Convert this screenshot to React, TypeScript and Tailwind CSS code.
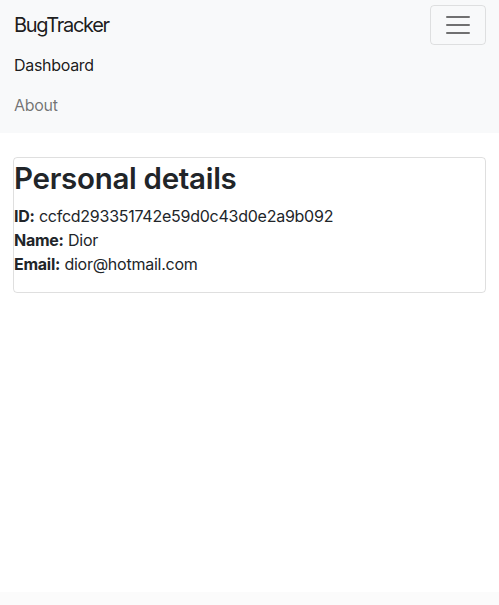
import React from "react";

export default function App() {
  return (
    <div
      className="min-h-[605px] flex flex-col bg-white text-[#212529]"
      style={{ fontFamily: 'Inter, "Liberation Sans", sans-serif' }}
    >
      <nav className="bg-[#f8f9fa] pl-[13px] pr-[13px] pt-[5px] pb-[8px]">
        <div className="flex items-center justify-between">
          <span className="text-[20px] leading-[30px] py-[5px] text-black/90 tracking-[-1.3px] pl-[1px]">
            BugTracker
          </span>
          <button className="w-[56px] h-[40px] flex items-center justify-center border border-black/10 rounded-[4px]">
            <svg width="30" height="30" viewBox="0 0 30 30">
              <path
                d="M4 7h22M4 15h22M4 23h22"
                stroke="rgba(0,0,0,0.55)"
                strokeWidth="2"
                strokeLinecap="round"
              />
            </svg>
          </button>
        </div>
        <div className="flex flex-col tracking-[-0.3px] pl-[1px]">
          <a className="py-[8px] text-[16px] leading-[24px] text-black/90">Dashboard</a>
          <a className="py-[8px] text-[16px] leading-[24px] text-black/55">About</a>
        </div>
      </nav>
      <div className="px-[13px] pt-[24px]">
        <div className="border border-black/[0.125] rounded-[4px]">
          <h1 className="text-[29.5px] leading-[1.2] font-semibold tracking-[-0.3px] mt-[3px] mb-[8px]">
            Personal details
          </h1>
          <p className="text-[16px] leading-[24px] mb-[16px] tracking-[-0.25px]">
            <b className="font-bold">ID:</b> ccfcd293351742e59d0c43d0e2a9b092
            <br />
            <b className="font-bold">Name:</b> Dior
            <br />
            <b className="font-bold">Email:</b> dior@hotmail.com
          </p>
        </div>
      </div>
      <div className="flex-1" />
      <div className="h-[13px] bg-[#fbfbfb]" />
    </div>
  );
}
